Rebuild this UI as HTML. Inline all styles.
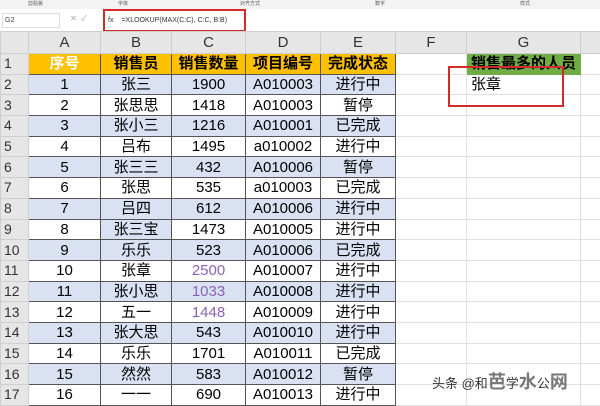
<!DOCTYPE html><html><head><meta charset="utf-8"><style>
body{margin:0;width:600px;height:402px;overflow:hidden;background:#fff;font-family:"Liberation Sans","Noto Sans CJK SC",sans-serif;position:relative}
.top{position:absolute;left:0;top:0;width:600px;height:9px;background:#f3f3f3;border-bottom:1px solid #ddd;font-size:5px;color:#555}
.fb{position:absolute;left:0;top:9px;width:600px;height:22px;background:#fff;border-bottom:1px solid #d4d4d4}
table{position:absolute;left:0;top:31px;border-collapse:collapse;font-size:15px;table-layout:fixed;width:620px}
td{height:19.7px;padding:0;text-align:center;border:1px solid #e0e0e0;white-space:nowrap;overflow:hidden;line-height:19px}
tr.h td{height:21px;background:#e6e6e6;color:#333;border-color:#cfcfcf}
td.r{background:#e6e6e6;color:#333;border-color:#cfcfcf;text-align:left;padding-left:3px;font-size:14px}
.t td.d{border:1px solid #555}
.b{background:#d9e1f2}
.o{background:#ffc000;font-weight:bold}
.p{color:#8a63b5}
</style></head><body>
<div class="top"><span style="position:absolute;left:28px">剪贴板</span><span style="position:absolute;left:118px">字体</span><span style="position:absolute;left:240px">对齐方式</span><span style="position:absolute;left:375px">数字</span><span style="position:absolute;left:520px">样式</span></div>
<div class="fb">
<div style="position:absolute;left:2px;top:4px;width:54px;height:13px;border:1px solid #ddd;font-size:7px;color:#444;line-height:13px;padding-left:2px">G2</div>
<div style="position:absolute;left:70px;top:4px;font-size:8px;color:#aaa">✕ &nbsp;✓</div>
<div style="position:absolute;left:103px;top:0px;width:139px;height:19px;border:2px solid #d42a2a;font-size:7px;line-height:19px;color:#333"><span style="margin-left:3px">fx</span><span style="margin-left:8px">=XLOOKUP(MAX(C:C), C:C, B:B)</span></div>
</div>
<table>
<colgroup><col style="width:28px"><col style="width:72px"><col style="width:71px"><col style="width:74px"><col style="width:75px"><col style="width:75px"><col style="width:71px"><col style="width:114px"><col style="width:40px"></colgroup>
<tr class="h"><td></td><td>A</td><td>B</td><td>C</td><td>D</td><td>E</td><td>F</td><td>G</td><td></td></tr>
<tr class="t"><td class="r">1</td><td class="d o" style="color:#fff">序号</td><td class="d o">销售员</td><td class="d o">销售数量</td><td class="d o">项目编号</td><td class="d o">完成状态</td><td></td><td style="background:#70ad47;font-weight:bold;border-color:#70ad47">销售最多的人员</td><td></td></tr>
<tr class="t"><td class="r">2</td><td class="d b">1</td><td class="d b">张三</td><td class="d b">1900</td><td class="d b">A010003</td><td class="d b">进行中</td><td></td><td style="text-align:left;padding-left:4px">张章</td><td></td></tr>
<tr class="t"><td class="r">3</td><td class="d">2</td><td class="d">张思思</td><td class="d">1418</td><td class="d">A010003</td><td class="d">暂停</td><td></td><td></td><td></td></tr>
<tr class="t"><td class="r">4</td><td class="d b">3</td><td class="d b">张小三</td><td class="d b">1216</td><td class="d b">A010001</td><td class="d b">已完成</td><td></td><td></td><td></td></tr>
<tr class="t"><td class="r">5</td><td class="d">4</td><td class="d">吕布</td><td class="d">1495</td><td class="d">a010002</td><td class="d">进行中</td><td></td><td></td><td></td></tr>
<tr class="t"><td class="r">6</td><td class="d b">5</td><td class="d b">张三三</td><td class="d b">432</td><td class="d b">A010006</td><td class="d b">暂停</td><td></td><td></td><td></td></tr>
<tr class="t"><td class="r">7</td><td class="d">6</td><td class="d">张思</td><td class="d">535</td><td class="d">a010003</td><td class="d">已完成</td><td></td><td></td><td></td></tr>
<tr class="t"><td class="r">8</td><td class="d b">7</td><td class="d b">吕四</td><td class="d b">612</td><td class="d b">A010006</td><td class="d b">进行中</td><td></td><td></td><td></td></tr>
<tr class="t"><td class="r">9</td><td class="d">8</td><td class="d b">张三宝</td><td class="d">1473</td><td class="d">A010005</td><td class="d">进行中</td><td></td><td></td><td></td></tr>
<tr class="t"><td class="r">10</td><td class="d b">9</td><td class="d b">乐乐</td><td class="d b">523</td><td class="d b">A010006</td><td class="d b">已完成</td><td></td><td></td><td></td></tr>
<tr class="t"><td class="r">11</td><td class="d">10</td><td class="d">张章</td><td class="d p">2500</td><td class="d">A010007</td><td class="d">进行中</td><td></td><td></td><td></td></tr>
<tr class="t"><td class="r">12</td><td class="d b">11</td><td class="d b">张小思</td><td class="d b p">1033</td><td class="d b">A010008</td><td class="d b">进行中</td><td></td><td></td><td></td></tr>
<tr class="t"><td class="r">13</td><td class="d">12</td><td class="d">五一</td><td class="d p">1448</td><td class="d">A010009</td><td class="d">进行中</td><td></td><td></td><td></td></tr>
<tr class="t"><td class="r">14</td><td class="d b">13</td><td class="d b">张大思</td><td class="d b">543</td><td class="d b">A010010</td><td class="d b">进行中</td><td></td><td></td><td></td></tr>
<tr class="t"><td class="r">15</td><td class="d">14</td><td class="d">乐乐</td><td class="d">1701</td><td class="d">A010011</td><td class="d">已完成</td><td></td><td></td><td></td></tr>
<tr class="t"><td class="r">16</td><td class="d b">15</td><td class="d b">然然</td><td class="d b">583</td><td class="d b">A010012</td><td class="d b">暂停</td><td></td><td></td><td></td></tr>
<tr class="t"><td class="r">17</td><td class="d">16</td><td class="d">一一</td><td class="d">690</td><td class="d">A010013</td><td class="d">进行中</td><td></td><td></td><td></td></tr>
</table>
<div style="position:absolute;left:448px;top:66px;width:112px;height:37px;border:2px solid #d42a2a"></div>
<div style="position:absolute;left:432px;top:368px;font-size:13px;color:#333">头条 @和<span style="color:#777;font-size:18px;font-weight:bold">芭</span>学<span style="color:#777;font-size:18px;font-weight:bold">水</span>公<span style="color:#777;font-size:18px;font-weight:bold">网</span></div>
</body></html>
